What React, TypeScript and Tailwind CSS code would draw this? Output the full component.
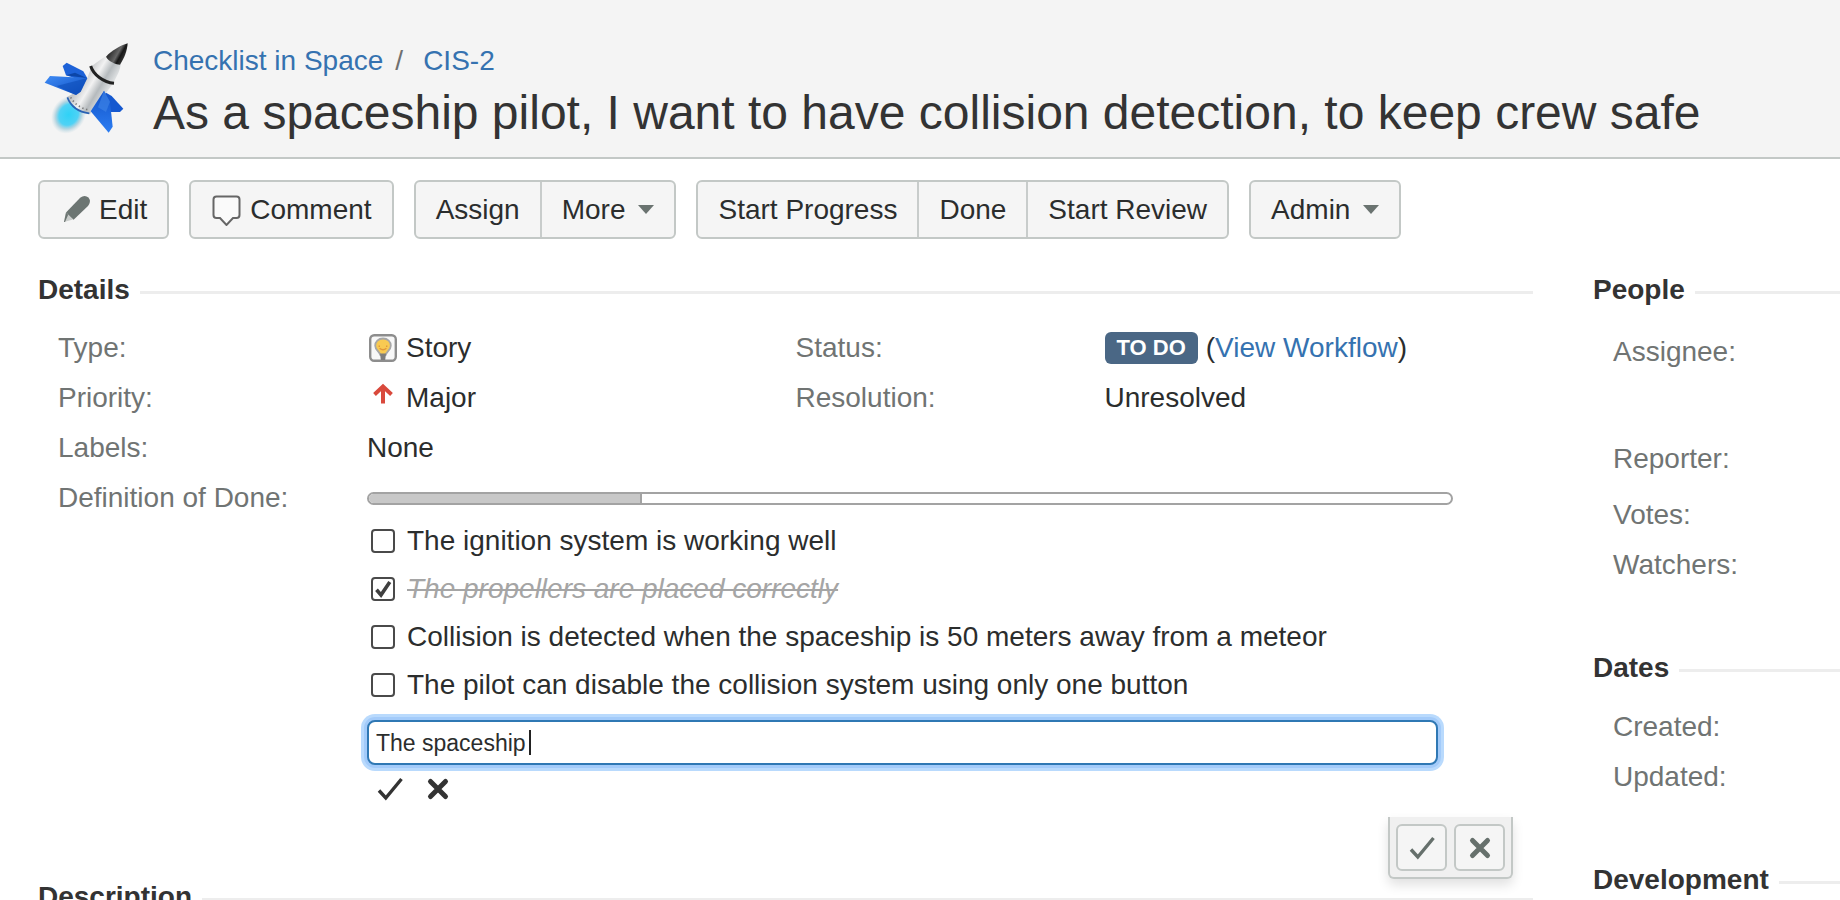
import { useState, type ReactNode } from "react";
import { clsx } from "clsx";

const checklist = [
  { id: "ignition", text: "The ignition system is working well", done: false },
  { id: "propellers", text: "The propellers are placed correctly", done: true },
  {
    id: "collision",
    text: "Collision is detected when the spaceship is 50 meters away from a meteor",
    done: false,
  },
  {
    id: "disable",
    text: "The pilot can disable the collision system using only one button",
    done: false,
  },
];

export default function App() {
  return (
    <div className="h-screen overflow-hidden bg-white font-['Liberation_Sans',Arial,sans-serif] text-[28px] text-[#2b2d2d]">
      <IssueHeader />
      <Toolbar />
      <div className="flex gap-[60px] pt-[31px] pl-[38px]">
        <main className="min-w-0 flex-1">
          <DetailsSection />
          <SectionHeading title="Description" className="mt-[60px]" />
        </main>
        <Sidebar />
      </div>
    </div>
  );
}

function IssueHeader() {
  return (
    <header className="flex gap-1 border-b-2 border-[#c3c8c6] bg-[#f4f4f4] pt-[30px] pb-[7px] pl-[30px]">
      <RocketLogo />
      <div className="-ml-px min-w-0 pt-[15px]">
        <nav className="flex leading-8" aria-label="Breadcrumb">
          <a href="#project" className="text-[#3572b0]">
            Checklist in Space
          </a>
          <span className="ml-3 text-[#707070]">/</span>
          <a href="#issue" className="ml-5 text-[#3572b0]">
            CIS-2
          </a>
        </nav>
        <h1 className="mt-2 text-[48px] leading-14 whitespace-nowrap text-[#333]">
          As a spaceship pilot, I want to have collision detection, to keep crew
          safe
        </h1>
      </div>
    </header>
  );
}

function Toolbar() {
  return (
    <div className="flex gap-5 pt-[21px] pl-[38px]">
      <ButtonGroup>
        <ToolbarButton>
          <PencilIcon />
          Edit
        </ToolbarButton>
      </ButtonGroup>
      <ButtonGroup>
        <ToolbarButton>
          <CommentIcon />
          Comment
        </ToolbarButton>
      </ButtonGroup>
      <ButtonGroup>
        <ToolbarButton>Assign</ToolbarButton>
        <ToolbarButton>
          More
          <CaretIcon />
        </ToolbarButton>
      </ButtonGroup>
      <ButtonGroup>
        <ToolbarButton>Start Progress</ToolbarButton>
        <ToolbarButton>Done</ToolbarButton>
        <ToolbarButton>Start Review</ToolbarButton>
      </ButtonGroup>
      <ButtonGroup>
        <ToolbarButton>
          Admin
          <CaretIcon />
        </ToolbarButton>
      </ButtonGroup>
    </div>
  );
}

function ButtonGroup({ children }: { children: ReactNode }) {
  return (
    <div className="flex h-[59px] divide-x-2 divide-[#c8cccb] rounded-md border-2 border-[#c3c8c6] bg-[#f5f5f5]">
      {children}
    </div>
  );
}

function ToolbarButton({ children }: { children: ReactNode }) {
  return (
    <button
      type="button"
      className="flex items-center gap-[7px] px-5 whitespace-nowrap hover:bg-[#e9e9e9]"
    >
      {children}
    </button>
  );
}

function SectionHeading({
  title,
  className,
}: {
  title: string;
  className?: string;
}) {
  return (
    <div className={clsx("flex items-center gap-2.5", className)}>
      <h2 className="leading-10 font-bold text-[#333]">{title}</h2>
      <div className="mt-1 h-[3px] flex-1 bg-[#ededed]" />
    </div>
  );
}

function Field({ label, children }: { label: string; children: ReactNode }) {
  return (
    <div className="flex leading-[50px]">
      <dt className="w-[309px] shrink-0 text-[#707473]">{label}</dt>
      <dd className="flex min-w-0 flex-1 items-center">{children}</dd>
    </div>
  );
}

function DetailsSection() {
  return (
    <section>
      <SectionHeading title="Details" />
      <dl className="mt-[13px] pl-5">
        <div className="grid grid-cols-2">
          <Field label="Type:">
            <StoryIcon />
            <span className="ml-[7px]">Story</span>
          </Field>
          <Field label="Status:">
            <span className="mr-2 rounded-md bg-[#4a6785] px-3 text-[22px] leading-8 font-bold text-white">
              TO DO
            </span>
            (
            <a href="#workflow" className="text-[#3572b0]">
              View Workflow
            </a>
            )
          </Field>
          <Field label="Priority:">
            <PriorityIcon />
            <span className="ml-[7px]">Major</span>
          </Field>
          <Field label="Resolution:">Unresolved</Field>
        </div>
        <Field label="Labels:">None</Field>
        <Field label="Definition of Done:">
          <DefinitionOfDone />
        </Field>
      </dl>
    </section>
  );
}

function DefinitionOfDone() {
  const [items, setItems] = useState(checklist);
  const [draft, setDraft] = useState("The spaceship");
  const done = items.filter((item) => item.done).length;

  const toggle = (id: string) =>
    setItems((prev) =>
      prev.map((item) => (item.id === id ? { ...item, done: !item.done } : item))
    );

  return (
    <div className="relative w-full pt-[19px] leading-12">
      <div className="mr-20 h-[13px] overflow-hidden rounded-full border-2 border-[#a3a3a3] bg-white">
        <div
          className="box-content h-full border-r-2 border-[#a3a3a3] bg-[#c8c8c8]"
          style={{ width: `${(done / items.length) * 100}%` }}
        />
      </div>

      <ul className="mt-3">
        {items.map((item) => (
          <li key={item.id}>
            <label className="flex items-center gap-3 pl-1">
              <span className="relative size-6 shrink-0">
                <input
                  type="checkbox"
                  checked={item.done}
                  onChange={() => toggle(item.id)}
                  className="block size-6 appearance-none rounded-[4px] border-2 border-[#4a4a4a] bg-white"
                />
                {item.done && (
                  <svg
                    viewBox="0 0 24 24"
                    className="pointer-events-none absolute inset-0 size-6"
                    fill="none"
                    stroke="#3f3f3f"
                    strokeWidth="3.6"
                  >
                    <path d="M5.5 12.8 10 18 18.8 5" />
                  </svg>
                )}
              </span>
              <span
                className={clsx(
                  "whitespace-nowrap",
                  item.done && "text-[#a5a5a5] italic line-through decoration-2"
                )}
              >
                {item.text}
              </span>
            </label>
          </li>
        ))}
      </ul>

      <div className="relative mt-[11px] mr-[95px]">
        <input
          type="text"
          aria-label="New checklist item"
          value={draft}
          onChange={(e) => setDraft(e.target.value)}
          className="block h-[45px] w-full rounded-lg border-2 border-[#2f78b4] bg-white px-[7px] text-[23px] shadow-[0_0_0_3px_#a3cbfa,0_0_0_6px_#b9dafd] outline-none"
        />
        {/* text cursor */}
        <span className="absolute top-2.5 left-[162px] h-[25px] w-0.5 bg-[#222]" />
      </div>

      <div className="mt-2.5 flex h-[42px] gap-5 pl-[9px] text-[#333]">
        <button type="button" aria-label="Add item" className="size-7">
          <CheckIcon />
        </button>
        <button type="button" aria-label="Discard item" className="size-7">
          <CrossIcon />
        </button>
      </div>

      <div className="absolute top-full right-5 flex gap-[7px] rounded-b-md border-2 border-t-0 border-[#c3c8c6] bg-[#f0f0f0] px-1.5 pt-[7px] pb-1.5 text-[#66706c] shadow-[0_6px_12px_rgba(0,0,0,0.12)]">
        <button
          type="button"
          aria-label="Save field"
          className="flex h-[47px] w-[51px] items-center justify-center rounded-md border-2 border-[#c3c8c6] bg-[#f5f5f5]"
        >
          <CheckIcon />
        </button>
        <button
          type="button"
          aria-label="Cancel edit"
          className="flex h-[47px] w-[51px] items-center justify-center rounded-md border-2 border-[#c3c8c6] bg-[#f5f5f5]"
        >
          <CrossIcon />
        </button>
      </div>
    </div>
  );
}

function Sidebar() {
  return (
    <aside className="w-[247px] shrink-0">
      <SectionHeading title="People" />
      <ul className="mt-[17px] pl-5 leading-[50px] text-[#707473]">
        <li className="mb-[57px]">Assignee:</li>
        <li className="mb-1.5">Reporter:</li>
        <li>Votes:</li>
        <li>Watchers:</li>
      </ul>
      <SectionHeading title="Dates" className="mt-[58px]" />
      <ul className="mt-[14px] pl-5 leading-[50px] text-[#707473]">
        <li>Created:</li>
        <li>Updated:</li>
      </ul>
      <SectionHeading title="Development" className="mt-[58px]" />
    </aside>
  );
}

function CheckIcon() {
  return (
    <svg
      viewBox="0 0 28 28"
      className="size-7"
      fill="none"
      stroke="currentColor"
      strokeWidth="3.4"
    >
      <path d="M3 15.5 9.8 23 25.5 4" />
    </svg>
  );
}

function CrossIcon() {
  return (
    <svg
      viewBox="0 0 28 28"
      className="size-7"
      fill="none"
      stroke="currentColor"
      strokeWidth="5"
      strokeLinecap="round"
    >
      <path d="M6.5 6.5 21.5 21.5M21.5 6.5 6.5 21.5" />
    </svg>
  );
}

function CaretIcon() {
  return (
    <svg viewBox="0 0 16 9" className="ml-1.5 h-[9px] w-4" fill="#6a7370">
      <path d="M0 0h16L8 9z" />
    </svg>
  );
}

function PencilIcon() {
  return (
    <svg viewBox="0 0 32 32" className="size-8">
      <path d="M6 18.500 13 25.500 4 28z" fill="#c9cdcb" />
      <path
        d="M20.200 3.800Q24.500 .2 28.500 3.500 31.500 7.500 28 12L13.600 25.800 6 18.600z"
        fill="#6c7572"
      />
      <path d="M6 18.500 8.200 20.800 5 28 4 28z" fill="#6c7572" />
    </svg>
  );
}

function CommentIcon() {
  return (
    <svg
      viewBox="0 0 32 32"
      className="size-8"
      fill="#fafafa"
      stroke="#666"
      strokeWidth="2"
    >
      <path d="M5.500 2.500h20q3 0 3 3V21q0 3-3 3h-3.500L15.500 31 9 24h-3.500q-3 0-3-3V5.500q0-3 3-3z" />
    </svg>
  );
}

function StoryIcon() {
  return (
    <svg viewBox="0 0 32 32" className="size-8">
      <rect
        x="3.200"
        y="3.200"
        width="25.600"
        height="25.600"
        rx="4"
        fill="#f8f8f8"
        stroke="#8d8d8d"
        strokeWidth="2.400"
      />
      <path
        d="M16 6.500c-4.800 0-7.800 3.300-7.800 7.200 0 4 4 5.800 5.200 9.300h5.200c1.200-3.500 5.200-5.300 5.200-9.300 0-3.900-3-7.200-7.800-7.200z"
        fill="#f8ca52"
        stroke="#a7a7a7"
        strokeWidth="1.800"
      />
      <path d="M13 21.500h6l-.8 6.500h-4.400z" fill="#7d7d7d" />
      <path
        d="M12.300 13.500v1.500M19.700 13.500v1.500M12.600 16.200q3.400 3 6.800 0"
        fill="none"
        stroke="#e2983a"
        strokeWidth="1.400"
      />
    </svg>
  );
}

function PriorityIcon() {
  return (
    <svg
      viewBox="0 0 32 32"
      className="size-8"
      fill="none"
      stroke="#d9493c"
      strokeWidth="4"
    >
      <path d="M16 5V21.500M7.500 12.500 16 4.500 24.500 12.500" />
    </svg>
  );
}

function RocketLogo() {
  return (
    <svg viewBox="0 0 360 360" className="size-[120px] shrink-0">
      <defs>
        <radialGradient id="flame">
          <stop offset="0" stopColor="#2fd2f6" />
          <stop offset=".55" stopColor="#4fd2f5" />
          <stop offset=".75" stopColor="#a9d0de" stopOpacity=".85" />
          <stop offset="1" stopColor="#c9dce4" stopOpacity="0" />
        </radialGradient>
        <linearGradient id="hull" x1="150" y1="160" x2="225" y2="205" gradientUnits="userSpaceOnUse">
          <stop offset="0" stopColor="#c4c6c8" />
          <stop offset=".35" stopColor="#f2f2f2" />
          <stop offset=".65" stopColor="#b5babd" />
          <stop offset="1" stopColor="#e4e6e7" />
        </linearGradient>
        <linearGradient id="nose" x1="240" y1="70" x2="285" y2="95" gradientUnits="userSpaceOnUse">
          <stop offset="0" stopColor="#333" />
          <stop offset=".4" stopColor="#666" />
          <stop offset=".6" stopColor="#161616" />
          <stop offset="1" stopColor="#444" />
        </linearGradient>
        <linearGradient id="wing" x1="0" y1="0" x2="1" y2="1">
          <stop offset="0" stopColor="#3f8cf5" />
          <stop offset="1" stopColor="#0b4bc0" />
        </linearGradient>
        <linearGradient id="fin" x1="0" y1="0" x2="0" y2="1">
          <stop offset="0" stopColor="#1253c8" />
          <stop offset="1" stopColor="#2c7df2" />
        </linearGradient>
      </defs>
      <ellipse cx="116" cy="254" rx="50" ry="60" fill="url(#flame)" transform="rotate(32 116 254)" />
      <path d="M98 108 110 98 160 124 172 145 135 145 108 136z" fill="#1d62d8" />
      <path d="M108 136 135 128 172 145z" fill="#0c46a8" />
      <path d="M218 182 245 198 280 236 270 246 240 246 222 225z" fill="#1558cf" />
      <path d="M186 107C205 95 222 80 232 78L272 103C270 125 258 142 250 160L180 252C155 248 120 225 112 200L135 188 172 144z" fill="url(#hull)" />
      <path d="M44 158 60 138 172 144 152 185 138 195z" fill="url(#wing)" />
      <path d="M80 168 172 144 152 185 138 195z" fill="#0d4cb8" opacity=".6" />
      <path d="M222 182 240 215 248 290 236 308 182 244z" fill="url(#fin)" />
      <path d="M222 182 240 215 228 246 204 232z" fill="#3c82e6" opacity=".7" />
      <path d="M228 80C245 62 272 46 293 40 292 62 282 86 270 104 254 102 236 94 228 80z" fill="url(#nose)" />
      <path d="M182 108C190 134 220 157 252 160" fill="none" stroke="#222" strokeWidth="9" />
      <path d="M112 202C122 228 146 246 178 250" fill="none" stroke="#2a62b4" strokeWidth="5" />
      <path d="M122 202C132 220 152 236 178 240" fill="none" stroke="#777" strokeWidth="5" strokeDasharray="4 8" />
    </svg>
  );
}
